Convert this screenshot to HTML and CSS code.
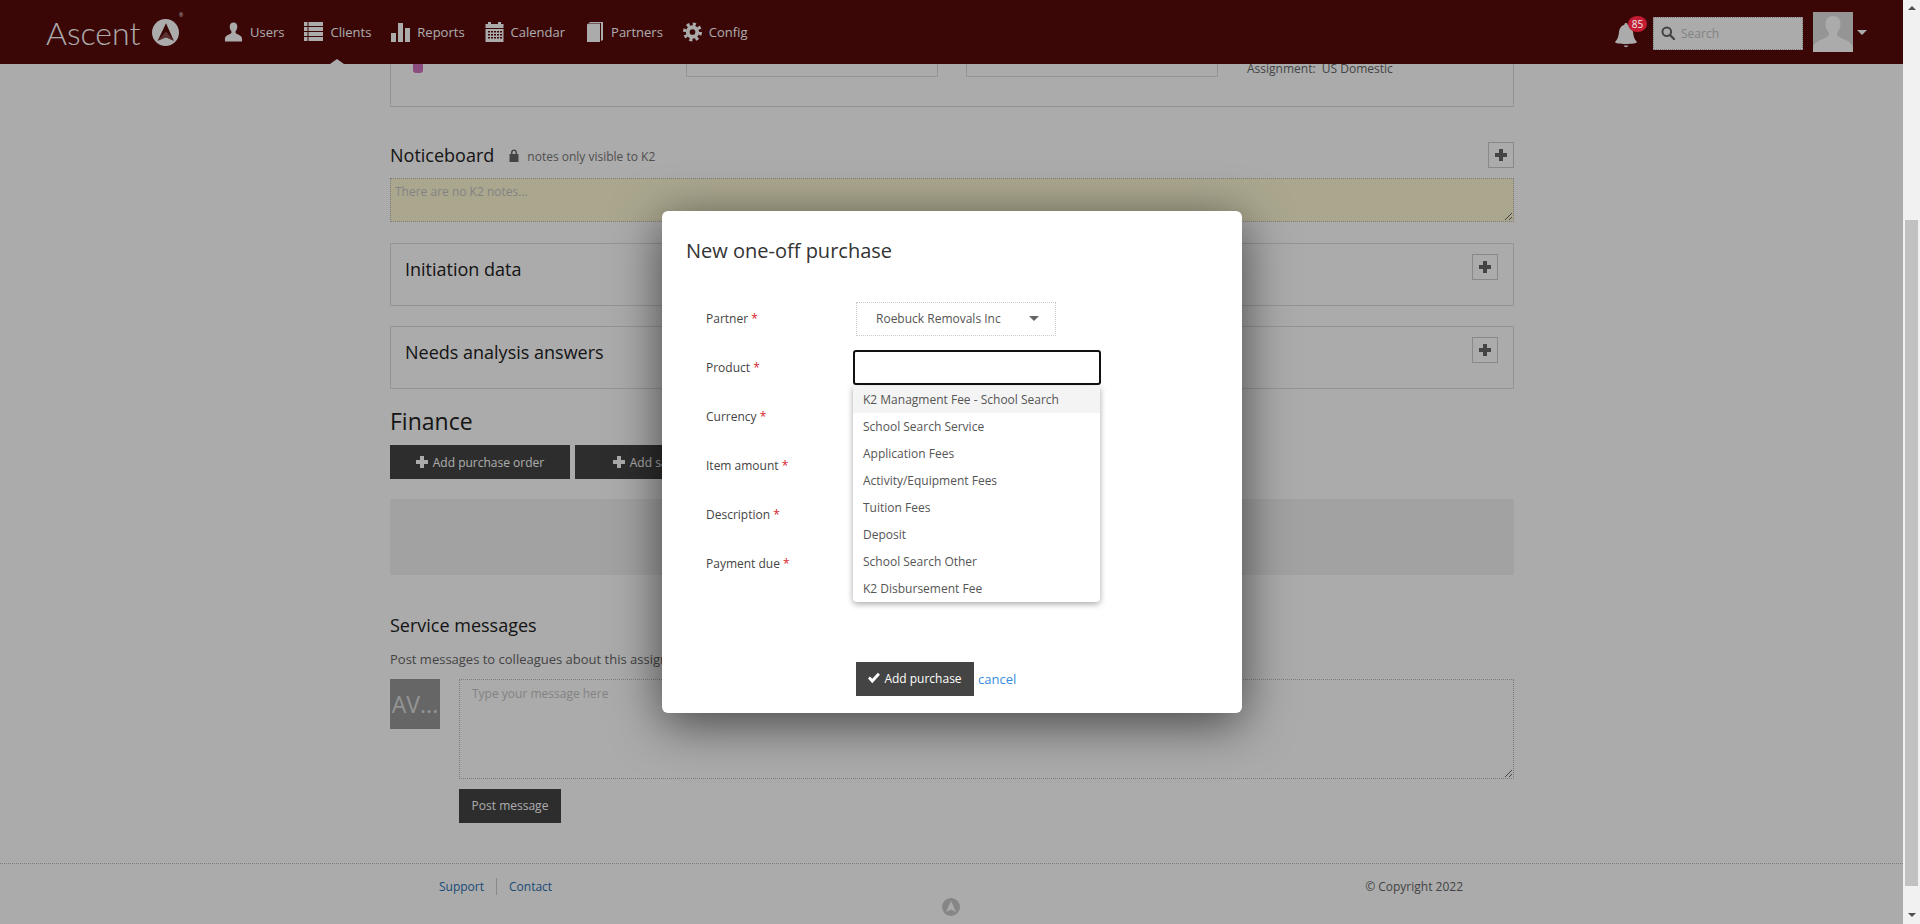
FILE: index.html
```html
<!DOCTYPE html>
<html lang="en">
<head>
  <meta charset="UTF-8" />
  <title>Ascent</title>
  <link rel="stylesheet" href="styles.css">
</head>
<body>
  <div class="app">
    <div class="viewport">
      <header class="topbar">
        <div class="logo">
          <span class="logo-text">Ascent</span>
          <svg class="logo-mark" viewBox="0 0 26 26"><circle cx="13" cy="13" r="13" fill="#fff"/><path d="M13.500 4 L21 21 L13.500 17.500 L5.500 21 Z" fill="#570909"/><path d="M13.500 12 L21 21 L13.500 17.500 L5.500 21 Z" fill="#8a4a4a"/></svg>
          <span class="logo-reg">®</span>
        </div>
        <nav class="nav">
          <a class="nav-item"><svg class="nav-icon" viewBox="0 0 20 20"><path d="M10 0C7.200 0 6 2 6 4.500c0 2 .8 3.600 1.700 4.700.3.400.3 1.300 0 1.800C6.800 12.600 1 13 1 17v3h18v-3c0-4-5.800-4.400-6.700-6-.3-.5-.3-1.400 0-1.800.9-1.100 1.700-2.700 1.700-4.700C14 2 12.800 0 10 0z"/></svg>Users</a>
          <a class="nav-item active"><svg class="nav-icon" viewBox="0 0 19 20"><path d="M0 0h3.500v4H0zM4.500 0H19v4H4.500zM0 5h3.500v4H0zM4.500 5H19v4H4.500zM0 10h3.500v4H0zM4.500 10H19v4H4.500zM0 15h3.500v4H0zM4.500 15H19v4H4.500z"/></svg>Clients</a>
          <a class="nav-item"><svg class="nav-icon" viewBox="0 0 19 20"><path d="M0 11h5v9H0zM7 1h5v19H7zM14 6h5v14h-5z"/></svg>Reports</a>
          <a class="nav-item"><svg class="nav-icon" viewBox="0 0 19 20"><path d="M3 0h3v2h7V0h3v2h2.500v4H.500V2H3zM.500 7h18v13H.500z"/><path class="cal-grid" d="M3 9h2v1.500H3zM6 9h2v1.500H6zM9 9h2v1.500H9zM12 9h2v1.500h-2zM15 9h2v1.500h-2zM3 12h2v1.500H3zM6 12h2v1.500H6zM9 12h2v1.500H9zM12 12h2v1.500h-2zM15 12h2v1.500h-2zM3 15h2v1.500H3zM6 15h2v1.500H6zM9 15h2v1.500H9zM12 15h2v1.500h-2zM15 15h2v1.500h-2z"/></svg>Calendar</a>
          <a class="nav-item"><svg class="nav-icon" viewBox="0 0 18 20"><path d="M1.500 3 Q1.500 1.500 3 1.500 H14.500 V20 H1.500 Z"/><path d="M4 0 H17.500 V18 L15.500 19 V1 H4 Z"/></svg>Partners</a>
          <a class="nav-item"><svg class="nav-icon" viewBox="0 0 20 20"><circle cx="10" cy="10" r="5" fill="none" stroke="currentColor" stroke-width="4"/><circle cx="10" cy="10" r="8.300" fill="none" stroke="currentColor" stroke-width="3.400" stroke-dasharray="3.260 3.260"/></svg>Config</a>
        </nav>
        <div class="topbar-right">
          <div class="bell">
            <svg class="bell-icon" viewBox="0 0 22 25"><path d="M11 0c1 0 1.600.7 1.600 1.700C16 2.500 17.500 5.500 18 9c.5 4 1 7 4 10 0 1.200-5 2-11 2S0 20.200 0 19c3-3 3.500-6 4-10 .5-3.500 2-6.500 5.400-7.300C9.400.7 10 0 11 0z"/><path d="M8.800 22.500h4.400c-.3 1-1.200 1.700-2.200 1.700s-1.900-.7-2.200-1.700z"/></svg>
            <span class="badge">85</span>
          </div>
          <label class="search">
            <svg class="search-icon" viewBox="0 0 14 14"><circle cx="5.800" cy="5.800" r="4.300" fill="none" stroke="currentColor" stroke-width="2"/><path d="M9 9l4 4" stroke="currentColor" stroke-width="2.400" stroke-linecap="round"/></svg>
            <input type="text" placeholder="Search">
          </label>
          <div class="avatar">
            <svg viewBox="0 0 40 40"><path d="M20 4c-5 0-7.500 3.500-7.500 8 0 3.500 1.300 6.300 3 8.200.6.700.6 2.400 0 3.300C13.500 27 1 28 0 36v4h40v-4c-1-8-13.500-9-15.500-12.500-.6-.9-.6-2.600 0-3.300 1.700-1.900 3-4.700 3-8.200 0-4.500-2.500-8-7.500-8z"/></svg>
          </div>
          <span class="avatar-caret"></span>
        </div>
      </header>

      <main class="content">
        <section class="summary-card">
          <span class="pill"></span>
          <div class="stub-input first"></div>
          <div class="stub-input"></div>
          <span class="assignment">Assignment:&nbsp; US Domestic</span>
        </section>

        <div class="notice-head">
          <h2 class="h-medium">Noticeboard</h2>
          <svg class="lock" viewBox="0 0 10 13"><path d="M2 5V3.500C2 1.500 3.300.5 5 .5s3 1 3 3V5h1.500v8H.500V5zM3.500 5h3V3.500C6.500 2.500 6 2 5 2s-1.500.5-1.500 1.500z"/></svg>
          <span class="notice-note">notes only visible to K2</span>
          <button class="plus-btn push"><svg viewBox="0 0 12 12"><path d="M4 0h4v4h4v4H8v4H4V8H0V4h4z"/></svg></button>
        </div>
        <textarea class="notice-text" placeholder="There are no K2 notes..."></textarea>

        <section class="fold-card">
          <h2 class="h-medium">Initiation data</h2>
          <button class="plus-btn"><svg viewBox="0 0 12 12"><path d="M4 0h4v4h4v4H8v4H4V8H0V4h4z"/></svg></button>
        </section>
        <section class="fold-card second">
          <h2 class="h-medium">Needs analysis answers</h2>
          <button class="plus-btn"><svg viewBox="0 0 12 12"><path d="M4 0h4v4h4v4H8v4H4V8H0V4h4z"/></svg></button>
        </section>

        <h2 class="h-large">Finance</h2>
        <div class="finance-actions">
          <button class="btn-dark wide"><svg class="btn-icon" viewBox="0 0 12 12"><path d="M4 0h4v4h4v4H8v4H4V8H0V4h4z"/></svg>Add purchase order</button>
          <button class="btn-dark wide"><svg class="btn-icon" viewBox="0 0 12 12"><path d="M4 0h4v4h4v4H8v4H4V8H0V4h4z"/></svg>Add sales order</button>
        </div>
        <div class="finance-empty"></div>

        <h2 class="h-medium service-title">Service messages</h2>
        <p class="service-note">Post messages to colleagues about this assignment</p>
        <div class="message-row">
          <div class="msg-avatar">AV...</div>
          <div class="message-col">
            <textarea class="message-text" placeholder="Type your message here"></textarea>
            <button class="btn-dark post">Post message</button>
          </div>
        </div>
      </main>

      <footer class="footer">
        <div class="footer-links">
          <a>Support</a>
          <span class="footer-sep"></span>
          <a>Contact</a>
        </div>
        <span class="copyright">© Copyright 2022</span>
        <svg class="footer-logo" viewBox="0 0 18 18"><circle cx="9" cy="9" r="9" fill="#c8c8c8"/><path d="M9 3l5 11-5-2.500L4 14z" fill="#fff"/></svg>
      </footer>

      <div class="overlay"></div>

      <div class="modal">
        <h3 class="modal-title">New one-off purchase</h3>
        <div class="form">
          <div class="form-row">
            <label>Partner <b>*</b></label>
            <div class="select"><span>Roebuck Removals Inc</span><i class="select-caret"></i></div>
          </div>
          <div class="form-row">
            <label>Product <b>*</b></label>
            <div class="combo">
              <div class="combo-input"></div>
              <ul class="combo-list">
                <li class="current">K2 Managment Fee - School Search</li>
                <li>School Search Service</li>
                <li>Application Fees</li>
                <li>Activity/Equipment Fees</li>
                <li>Tuition Fees</li>
                <li>Deposit</li>
                <li>School Search Other</li>
                <li>K2 Disbursement Fee</li>
              </ul>
            </div>
          </div>
          <div class="form-row"><label>Currency <b>*</b></label></div>
          <div class="form-row"><label>Item amount <b>*</b></label></div>
          <div class="form-row"><label>Description <b>*</b></label></div>
          <div class="form-row"><label>Payment due <b>*</b></label></div>
        </div>
        <div class="modal-actions">
          <button class="btn-dark add"><svg class="btn-icon" viewBox="0 0 14 12"><path d="M0 6.500l2.200-2.300L5 7l6.500-7L14 2.300 5 12z"/></svg>Add purchase</button>
          <a class="cancel">cancel</a>
        </div>
      </div>
    </div>

    <div class="scrollbar">
      <span class="arrow up"></span>
      <div class="thumb"></div>
      <span class="arrow down"></span>
    </div>
  </div>
</body>
</html>
```

FILE: styles.css
```css
* { margin: 0; padding: 0; box-sizing: border-box; }

html, body {
  height: 924px;
  overflow: hidden;
}

body {
  font-family: "Open Sans", sans-serif;
  font-size: 12px;
  color: #444;
  background: #fff;
}

button, input, textarea {
  font-family: "Open Sans", sans-serif;
}

.app {
  display: flex;
  height: 924px;
}

.viewport {
  position: relative;
  flex: 1;
  display: flex;
  flex-direction: column;
  overflow: hidden;
}

/* top bar */
.topbar {
  display: flex;
  align-items: center;
  flex: none;
  height: 64px;
  padding-left: 46px;
  background: #570909;
  color: #fff;
}

.logo {
  display: flex;
  align-items: center;
  width: 178px;
}

.logo-text {
  font-family: Lato, sans-serif;
  font-weight: 300;
  font-size: 32px;
  line-height: 40px;
  width: 106px;
  padding-top: 2px;
}

.logo-mark {
  width: 27px;
  height: 27px;
}

.logo-reg {
  align-self: flex-start;
  font-size: 5px;
  line-height: 8px;
}

.nav {
  display: flex;
  height: 64px;
}

.nav-item {
  position: relative;
  display: flex;
  align-items: center;
  gap: 7px;
  margin-right: 20px;
  font-size: 13px;
}

.nav-item.active::after {
  content: "";
  position: absolute;
  left: 26px;
  bottom: 0;
  border-left: 7px solid transparent;
  border-right: 7px solid transparent;
  border-bottom: 5px solid #fff;
}

.nav-icon {
  width: 19px;
  height: 20px;
  fill: currentColor;
}

.cal-grid {
  fill: #570909;
}

.topbar-right {
  display: flex;
  align-items: center;
  margin-left: auto;
  padding-right: 36px;
}

.bell {
  position: relative;
  width: 22px;
  height: 25px;
  margin-right: 16px;
  margin-top: 6px;
}

.bell-icon {
  display: block;
  width: 22px;
  height: 25px;
  fill: #fff;
}

.badge {
  position: absolute;
  z-index: 11;
  top: -7px;
  left: 13px;
  width: 19px;
  height: 16px;
  border-radius: 50%;
  background: #c41c33;
  color: #eee;
  font-size: 10px;
  line-height: 16px;
  text-align: center;
}

.search {
  display: flex;
  align-items: center;
  width: 150px;
  height: 33px;
  padding-left: 7px;
  background: #fff;
  border: 1px dotted #bbb;
  margin-right: 10px;
  margin-top: 2px;
}

.search-icon {
  width: 14px;
  height: 14px;
  color: #666;
  flex: none;
}

.search input {
  width: 110px;
  margin-left: 6px;
  border: none;
  outline: none;
  background: none;
  font-size: 12px;
}

.search input::placeholder {
  color: #c4c4c4;
  opacity: 1;
}

.avatar {
  width: 40px;
  height: 40px;
  background: #dedede;
}

.avatar svg {
  display: block;
  fill: #fff;
}

.avatar-caret {
  margin-left: 4px;
  border-left: 5px solid transparent;
  border-right: 5px solid transparent;
  border-top: 5px solid #fff;
}

/* main column */
.content {
  flex: none;
  width: 1124px;
  margin-left: 390px;
}

.summary-card {
  position: relative;
  height: 43px;
  border: 1px solid #ddd;
  border-top: none;
  display: flex;
  align-items: flex-start;
}

.pill {
  width: 10px;
  height: 9px;
  margin-left: 22px;
  background: #cf72bd;
  border-radius: 0 0 3px 3px;
}

.stub-input {
  width: 252px;
  height: 13px;
  margin-left: 28px;
  border: 1px solid #ddd;
  border-top: none;
}

.stub-input.first {
  margin-left: 263px;
}

.assignment {
  margin-left: 29px;
  font-size: 12px;
  line-height: 16px;
  margin-top: -3px;
  color: #666;
}

.h-medium {
  font-size: 18px;
  font-weight: 400;
  line-height: 24px;
  color: #222;
}

.h-large {
  font-size: 23px;
  font-weight: 400;
  line-height: 33px;
  color: #222;
  margin-top: 16px;
  margin-bottom: 7px;
}

.notice-head {
  display: flex;
  align-items: center;
  height: 26px;
  margin-top: 35px;
}

.lock {
  width: 10px;
  height: 13px;
  margin-left: 15px;
  fill: #666;
}

.notice-note {
  margin-left: 8px;
  padding-top: 2px;
  font-size: 12px;
  color: #777;
}

.plus-btn {
  display: flex;
  align-items: center;
  justify-content: center;
  flex: none;
  width: 26px;
  height: 26px;
  background: none;
  border: 1px solid #ccc;
}

.plus-btn svg {
  width: 12px;
  height: 12px;
  fill: #666;
}

.push {
  margin-left: auto;
}

.notice-text {
  display: block;
  width: 100%;
  height: 44px;
  margin-top: 10px;
  padding: 4px 4px;
  font-size: 12px;
  background: #fff9d5;
  border: 1px dotted #bbb;
  outline: none;
}

.notice-text::placeholder,
.message-text::placeholder {
  color: #c4c4c4;
  opacity: 1;
}

.fold-card {
  display: flex;
  justify-content: space-between;
  align-items: flex-start;
  height: 63px;
  margin-top: 21px;
  padding: 10px 15px 0 14px;
  border: 1px solid #ddd;
}

.fold-card.second {
  margin-top: 20px;
}

.fold-card .h-medium {
  margin-top: 3px;
}

.finance-actions {
  display: flex;
  gap: 5px;
}

.btn-dark {
  display: inline-flex;
  align-items: center;
  justify-content: center;
  height: 34px;
  background: #444;
  color: #fff;
  border: none;
  font-size: 12px;
}

.btn-dark.wide {
  width: 180px;
}

.btn-icon {
  width: 12px;
  height: 12px;
  margin-right: 5px;
  fill: #fff;
}

.finance-empty {
  height: 76px;
  margin-top: 20px;
  background: #f2f2f2;
}

.service-title {
  margin-top: 38px;
}

.service-note {
  margin-top: 13px;
  font-size: 13px;
  line-height: 18px;
  color: #666;
}

.message-row {
  display: flex;
  gap: 19px;
  margin-top: 11px;
}

.msg-avatar {
  flex: none;
  width: 50px;
  height: 50px;
  background: #999;
  color: #ddd;
  font-size: 23px;
  line-height: 50px;
  text-align: center;
  overflow: hidden;
}

.message-col {
  flex: 1;
}

.message-text {
  display: block;
  width: 100%;
  height: 100px;
  padding: 5px 12px;
  font-size: 12px;
  border: 1px dotted #bbb;
  outline: none;
}

.btn-dark.post {
  width: 102px;
  margin-top: 10px;
  padding-bottom: 2px;
}

/* footer */
.footer {
  position: relative;
  flex: none;
  height: 61px;
  margin-top: 40px;
  border-top: 1px dotted #bbb;
  display: flex;
  padding: 14px 0 0 439px;
}

.footer-links {
  display: flex;
  align-items: center;
  height: 16px;
  color: #2a6fb0;
  font-size: 12px;
}

.footer-sep {
  width: 1px;
  height: 17px;
  margin: 0 12px;
  background: #ccc;
}

.copyright {
  margin-left: 813px;
  line-height: 18px;
  font-size: 12px;
  color: #666;
}

.footer-logo {
  position: absolute;
  left: 942px;
  top: 34px;
  width: 18px;
  height: 18px;
}

/* modal */
.overlay {
  position: absolute;
  inset: 0;
  z-index: 10;
  background: rgba(0, 0, 0, 0.33);
}

.modal {
  position: absolute;
  z-index: 20;
  left: 662px;
  top: 211px;
  width: 580px;
  height: 502px;
  padding: 26px 24px 0;
  background: #fff;
  border-radius: 6px;
  box-shadow: 0 10px 50px rgba(0, 0, 0, 0.6);
}

.modal-title {
  font-size: 20px;
  font-weight: 400;
  line-height: 28px;
  color: #333;
}

.form {
  margin-top: 29px;
}

.form-row {
  display: flex;
  align-items: center;
  height: 49px;
  padding-left: 20px;
}

.form-row label {
  width: 150px;
  flex: none;
  font-size: 12px;
  color: #444;
}

.form-row label b {
  font-weight: 400;
  color: #d9232e;
}

.select {
  display: flex;
  align-items: center;
  justify-content: space-between;
  width: 200px;
  height: 34px;
  padding: 0 16px 0 19px;
  font-size: 12px;
  color: #555;
  border: 1px dotted #ccc;
}

.select-caret {
  border-left: 5px solid transparent;
  border-right: 5px solid transparent;
  border-top: 5px solid #666;
}

.combo {
  position: relative;
  margin-left: -3px;
}

.combo-input {
  width: 248px;
  height: 35px;
  background: #fff;
  border: 2px solid #111;
  border-radius: 3px;
}

.combo-list {
  position: absolute;
  top: 36px;
  left: 0;
  width: 247px;
  list-style: none;
  background: #fff;
  border-radius: 0 0 4px 4px;
  box-shadow: 0 2px 6px rgba(0, 0, 0, 0.35);
}

.combo-list li {
  height: 27px;
  padding-left: 10px;
  font-size: 12px;
  line-height: 27px;
  color: #555;
}

.combo-list li.current {
  background: #f4f4f4;
}

.modal-actions {
  display: flex;
  align-items: center;
  gap: 4px;
  margin-top: 74px;
  padding-left: 170px;
}

.btn-dark.add {
  width: 118px;
  padding-bottom: 2px;
}

.btn-dark.add .btn-icon {
  margin-right: 4px;
}

.cancel {
  color: #3a8dde;
  font-size: 13px;
}

/* fake page scrollbar, page is shown scrolled */
.scrollbar {
  flex: none;
  width: 17px;
  display: flex;
  flex-direction: column;
  align-items: center;
  background: #f1f1f1;
}

.thumb {
  width: 13px;
  height: 666px;
  margin-top: 210px;
  background: #c1c1c1;
}

.arrow {
  width: 0;
  height: 0;
  border-left: 4px solid transparent;
  border-right: 4px solid transparent;
}

.arrow.up {
  margin-top: 6px;
  border-bottom: 4px solid #505050;
}

.arrow.down {
  margin-top: 27px;
  border-top: 4px solid #505050;
}
```
